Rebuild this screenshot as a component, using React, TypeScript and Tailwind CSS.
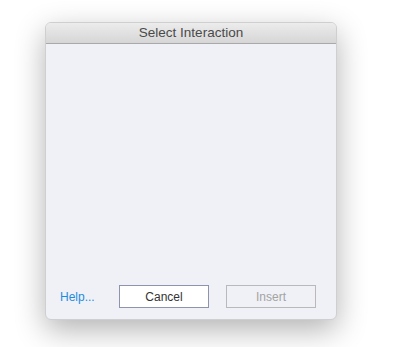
export default function App() {
  return (
    <div className="w-[407px] h-[347px] bg-white pt-[22px] pl-[45px]" style={{ fontFamily: '"Helvetica Neue", "Liberation Sans", Arial, sans-serif' }}>
      <div className="w-[292px] h-[298px] rounded-[6px] bg-[#f0f1f6] flex flex-col overflow-hidden border border-[#cfcfcf] shadow-[0_10px_30px_rgba(0,0,0,0.3)]">
        <div className="h-[21px] shrink-0 flex items-center justify-center bg-gradient-to-b from-[#ececec] to-[#d6d6d6] border-b border-[#a9a9a9] text-[13.5px] text-[#4a4a4a]">
          Select Interaction
        </div>
        <div className="flex-1" />
        <div className="h-[23px] flex items-center mb-[11px]">
          <span className="ml-[14px] w-[59px] text-[12px] text-[#1d8ce0]">Help...</span>
          <button className="w-[90px] h-[23px] bg-white border border-[#8e94ae] text-[12px] text-[#333] font-medium">Cancel</button>
          <button className="ml-[17px] w-[90px] h-[23px] bg-[#f0f1f6] border border-[#b9b9bb] text-[12px] text-[#a3a3a3]">Insert</button>
        </div>
      </div>
    </div>
  );
}
